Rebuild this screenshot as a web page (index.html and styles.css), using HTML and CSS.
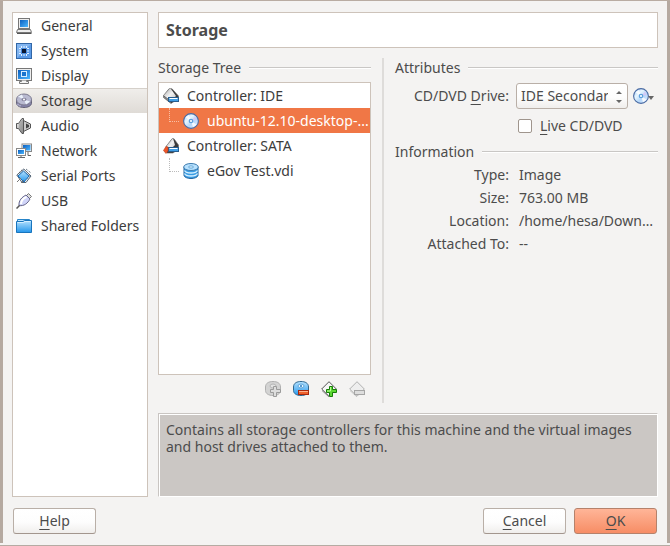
FILE: index.html
```html
<!DOCTYPE html>
<html lang="en">
<head>
<meta charset="utf-8">
<meta name="viewport" content="width=device-width, initial-scale=1">
<title>Settings - Storage</title>
<link rel="stylesheet" href="styles.css">
</head>
<body>
<svg class="defs" aria-hidden="true">
  <defs>
    <linearGradient id="blue" x1="0" y1="0" x2="1" y2="1"><stop offset="0" stop-color="#0b5fc0"/><stop offset="1" stop-color="#4db8ff"/></linearGradient>
    <linearGradient id="sky" x1="0" y1="0" x2="0" y2="1"><stop offset="0" stop-color="#b5e2ff"/><stop offset="1" stop-color="#2496ea"/></linearGradient>
    <linearGradient id="metal" x1="0" y1="0" x2="1" y2="1"><stop offset="0" stop-color="#fff"/><stop offset="1" stop-color="#777"/></linearGradient>
    <linearGradient id="plate" x1="0" y1="0" x2="1" y2="1"><stop offset="0" stop-color="#aaa"/><stop offset=".5" stop-color="#f2f2f2"/><stop offset="1" stop-color="#bbb"/></linearGradient>
    <linearGradient id="disc" x1="0" y1="0" x2="1" y2="1"><stop offset="0" stop-color="#8fc0f5"/><stop offset=".35" stop-color="#e8f6ff"/><stop offset=".6" stop-color="#b5d8fb"/><stop offset="1" stop-color="#eaf0ff"/></linearGradient>
    <symbol id="cd" viewBox="0 0 16 16">
      <circle cx="8" cy="8" r="7.400" fill="url(#disc)" stroke="#4a6aa2" stroke-width="1.100"/>
      <path d="M8 8 2.500 4.500A6.500 6.500 0 0 1 6 2Z" fill="#fff" opacity=".8"/>
      <path d="M8 8 13.500 11.500A6.500 6.500 0 0 1 10 14Z" fill="#fff" opacity=".8"/>
      <path d="M8 8 12 3.500 14 7Z" fill="#d7c6f5" opacity=".8"/>
      <circle cx="8" cy="8" r="2.300" fill="#5b9fdc"/><circle cx="8" cy="8" r="1.100" fill="#fff"/>
    </symbol>
  </defs>
</svg>
<main class="dialog">
  <div class="panes">
    <nav class="categories" aria-label="Categories">
      <a href="#general"><svg viewBox="0 0 16 16"><rect x="2.500" y=".5" width="11" height="10" fill="#eee" stroke="#777"/><rect x="4" y="2" width="8" height="7" fill="url(#blue)"/><path d="M1.500 11.500h13l1 3H.5z" fill="#eee" stroke="#777"/><path d="M1 15.500h14.500" stroke="#555"/></svg>General</a>
      <a href="#system"><svg viewBox="0 0 16 16"><rect x=".5" y=".5" width="15" height="15" fill="#5b9be8" stroke="#3267a7"/><path d="M1 1h14L1 15z" fill="#82b5f0"/><path d="M3 5.500h2M3 8h2M3 10.500h2M11 5.500h2M11 8h2M11 10.500h2M5.500 3v2M8 3v2M10.500 3v2M5.500 11v2M8 11v2M10.500 11v2" stroke="#e3f1ff"/><rect x="5" y="5" width="6" height="6" fill="#4a8bdc"/><rect x="6" y="6" width="4" height="4" fill="#0b1730"/></svg>System</a>
      <a href="#display"><svg viewBox="0 0 16 16"><rect x=".5" y=".5" width="15" height="12" fill="#eee" stroke="#777"/><rect x="2" y="2" width="12" height="9" fill="url(#blue)"/><rect x="5.500" y="3.500" width="5" height="5" fill="#1874cf" stroke="#d8efff"/><path d="M5.500 12.500v1h-2v2h9v-2h-2v-1" fill="#f4f4f4" stroke="#777"/></svg>Display</a>
      <a href="#storage" class="current" aria-current="page"><svg viewBox="0 0 16 16"><path d="M.5 6.500v4C1 13 4 14.500 8 14.500s7-1.500 7.500-4v-4z" fill="#8583a8" stroke="#656378"/><ellipse cx="8" cy="6.500" rx="7.500" ry="5.500" fill="#b9bad1" stroke="#7b798f"/><path d="M8 6.500 2 3.500 6 1.500zM8 6.500l6 2-4 3z" fill="#eaf1fb"/><ellipse cx="8" cy="6.500" rx="2.500" ry="1.700" fill="#86849d"/><circle cx="8" cy="6.500" r="1" fill="#fff"/><path d="M2 11v1.500M4 12v1.500" stroke="#cfd0e8"/></svg>Storage</a>
      <a href="#audio"><svg viewBox="0 0 16 16"><path d="M.5 5.500h2l3.500-5h1.500v15H6l-3.500-5h-2z" fill="url(#metal)" stroke="#555"/><path d="M3 5.500 7 1v14l-4-4.500z" fill="#999" opacity=".6"/><path d="M7.500 2.500 14.500 6v4l-7 3.500z" fill="#ccc" stroke="#555"/><path d="M10 5.500 13 7v2l-3 1.500z" fill="#444"/></svg>Audio</a>
      <a href="#network"><svg viewBox="0 0 16 16"><rect x="6" y="1" width="9.500" height="7.500" fill="#fff" stroke="#888"/><rect x="7" y="2" width="7.500" height="5.500" fill="url(#blue)"/><path d="M12 9v3.500h3" fill="none" stroke="#666"/><rect x=".5" y="5.500" width="9" height="7" fill="#fff" stroke="#888"/><rect x="2" y="7" width="6" height="4" fill="url(#blue)"/><path d="M5 13v1.500M2 14.500h7" stroke="#666"/></svg>Network</a>
      <a href="#serial"><svg viewBox="0 0 16 16"><path d="m.8 7 7-6 7.200 7-5 6.500H6z" fill="#eee" stroke="#567"/><path d="m5 2 10 7M3 4l10 7M10 1l5 4" stroke="#456" stroke-dasharray="1 1"/><path d="m2 8 5.500-5 5.500 5-5 6z" fill="url(#sky)" stroke="#176bb7"/><path d="m1 14 4-4M5 15l3-3" stroke="#777"/></svg>Serial Ports</a>
      <a href="#usb"><svg viewBox="0 0 16 16"><path d="m10.500 2.500 2-2 3 3-2 2z" fill="#ddd" stroke="#777"/><path d="M3 12.500C2.500 7.500 6 4 10 2l4 4c-2 4-6 7.500-11 6.500z" fill="#d0d4f8" stroke="#66668a"/><path d="M5 11c0-4 3-6 5.500-7" fill="none" stroke="#fff" stroke-width="2"/><path d="M3.500 12.500.5 15.500" stroke="#555" stroke-width="1.500"/></svg>USB</a>
      <a href="#shared"><svg viewBox="0 0 16 16"><path d="M1.500 13V1.500h12V5" fill="#bde5ff" stroke="#2784c8"/><path d="M.5 14.500v-11H7L8.500 2.500h7v12z" fill="url(#sky)" stroke="#1874bd"/><path d="M1.500 4.500h6L9 3.500h5.500" fill="none" stroke="#d4efff"/></svg>Shared Folders</a>
    </nav>

    <div class="page">
      <h1>Storage</h1>
      <div class="columns">
        <section class="storage">
          <h2>Storage Tree</h2>
          <ul class="tree">
            <li><svg viewBox="0 0 16 16"><path d="M.5 7.500 6 .8h3L15.500 8v2.500L8 15.500.5 9.500z" fill="#3a3a3a" stroke="#666" stroke-width=".6"/><path d="M.7 7.500 6.300 1H8l5 7-5 5z" fill="url(#plate)"/><path d="m.7 8 7.300 5v2L.7 9.500z" fill="#888"/><rect x="5.500" y="9.500" width="10" height="4" fill="#3f9fe6" stroke="#285d8e"/><path d="M6.500 10.500h8" stroke="#fff"/></svg>Controller: IDE</li>
            <li class="child selected"><svg><use href="#cd"/></svg><span>ubuntu-12.10-desktop-...</span></li>
            <li><svg viewBox="0 0 16 16"><path d="m3 8.500 6-7.700h2L15.500 7v4L10 15H4z" fill="#3a3a3a" stroke="#666" stroke-width=".6"/><path d="m3.200 8.500 6-7.500h1L12 7l-6 6z" fill="url(#plate)"/><rect x="5.500" y="9.500" width="10" height="4" fill="#3f9fe6" stroke="#285d8e"/><path d="M6.500 10.500h8" stroke="#fff"/><path d="m3 8.500-2.500 4 2.500 3L5 13V9z" fill="#ee5528" stroke="#b63a18" stroke-width=".6"/></svg>Controller: SATA</li>
            <li class="child"><svg viewBox="0 0 16 16"><path d="M1 4v8.500C1.500 14.500 5 15.500 8 15.500s6.500-1 7-3V4z" fill="#399ce4" stroke="#22649e"/><path d="M1.500 7.500c1 2 4 2.500 6.500 2.500s5.500-.5 6.500-2.500M1.500 10.500c1 2 4 2.500 6.500 2.500s5.500-.5 6.500-2.500" fill="none" stroke="#d8f1ff" stroke-width="1.300"/><ellipse cx="8" cy="4" rx="7.300" ry="3.500" fill="#b8e2ff" stroke="#3d7bae"/><ellipse cx="8" cy="4" rx="2.500" ry="1.100" fill="#f5fcff" stroke="#63a7d9"/></svg><span>eGov Test.vdi</span></li>
          </ul>
          <div class="tools">
            <button aria-label="Add attachment" disabled><svg viewBox="0 0 16 16"><path d="M.5 6C.5 2 4 .5 8 .5s7.500 1.500 7.500 5.500v3.500c0 3-3 5-7.500 5s-7.500-2-7.500-5z" fill="#d3d3d3" stroke="#b0b0b0"/><ellipse cx="8" cy="5" rx="3" ry="2" fill="#e2e2e2" stroke="#b5b5b5"/><path d="M8.500 5.500h3v3h4v3h-4v4h-3v-4h-3v-3h3z" fill="#ddd" stroke="#9b9b9b"/></svg></button>
            <button aria-label="Remove attachment"><svg viewBox="0 0 16 16"><path d="M.5 6C.5 2 4 .5 8 .5s7.500 1.500 7.500 5.500v3.500c0 3-3 5-7.500 5s-7.500-2-7.500-5z" fill="url(#sky)" stroke="#31688f"/><ellipse cx="8" cy="5" rx="3" ry="2" fill="#e8f7ff" stroke="#5ca4d9"/><circle cx="8" cy="5" r="1" fill="#287bc0"/><rect x="5.500" y="9.500" width="10" height="4" fill="#ef622d" stroke="#a9270c"/><path d="M6 10.500h9" stroke="#ffb18c"/></svg></button>
            <button aria-label="Add controller"><svg viewBox="0 0 16 16"><path d="m.7 8 7.300-7.300L15.300 8 8 15.300z" fill="#f5f5f5" stroke="#555"/><path d="M1 9.500 8 16" stroke="#888"/><path d="M8.500 5.500h3v3h4v3h-4v4h-3v-4h-3v-3h3z" fill="#5ad632" stroke="#167c08"/><path d="M9.500 6v4H6" fill="none" stroke="#b7ff91"/></svg></button>
            <button aria-label="Remove controller" disabled><svg viewBox="0 0 16 16"><path d="m.7 8 7.300-7.300L15.300 8 8 15.300z" fill="#eee" stroke="#b0b0b0"/><path d="M1 9.500 8 16" stroke="#c5c5c5"/><rect x="5.500" y="9.500" width="10" height="4" fill="#ddd" stroke="#a5a5a5"/></svg></button>
          </div>
        </section>

        <section class="details">
          <h2>Attributes</h2>
          <div class="fields attributes">
            <label for="drive">CD/DVD <u>D</u>rive:</label>
            <div class="drive">
              <div class="combo">
                <select id="drive"><option>IDE Secondary Master</option></select>
                <svg viewBox="0 0 6 12"><path d="m0 3 3-3 3 3zM0 9l3 3 3-3z" fill="#666"/></svg>
              </div>
              <button class="choose" aria-label="Choose disk"><svg><use href="#cd"/></svg><svg class="arrow" viewBox="0 0 6 4"><path d="M0 0h6L3 4z" fill="#666"/></svg></button>
            </div>
            <div class="live"><input type="checkbox" id="live"><label for="live"><u>L</u>ive CD/DVD</label></div>
          </div>
          <h2>Information</h2>
          <dl class="fields info">
            <dt>Type:</dt><dd>Image</dd>
            <dt>Size:</dt><dd>763.00 MB</dd>
            <dt>Location:</dt><dd>/home/hesa/Down…</dd>
            <dt>Attached To:</dt><dd>--</dd>
          </dl>
        </section>
      </div>
      <p class="hint">Contains all storage controllers for this machine and the virtual images and host drives attached to them.</p>
    </div>
  </div>
  <footer>
    <button class="push help"><u>H</u>elp</button>
    <button class="push"><u>C</u>ancel</button>
    <button class="push default"><u>O</u>K</button>
  </footer>
</main>
</body>
</html>
```

FILE: styles.css
```css
* { box-sizing: border-box; }

body {
  margin: 0;
  min-height: 100vh;
  display: flex;
  flex-direction: column;
  padding-bottom: 2px;
  border-top: 1px solid #b9aca2;
  border-bottom: 1px solid #b5aba3;
  background: #f4f3f2;
  color: #4c4c4c;
  font: 14px/20px "Noto Sans", "Open Sans", sans-serif;
}

button, select { font: inherit; color: inherit; }
h1, h2, p, ul, dl, dd { margin: 0; padding: 0; }
ul { list-style: none; }
svg { width: 16px; height: 16px; flex: none; display: block; }
.defs { position: absolute; width: 0; height: 0; }
u { text-decoration-thickness: 1px; text-underline-offset: 3px; }

.dialog {
  flex: 1;
  display: flex;
  flex-direction: column;
  gap: 11px;
  padding: 11px 9px 9px;
  border: solid #b5a9a0;
  border-width: 0 3px;
}

.panes {
  flex: 1;
  display: grid;
  grid-template-columns: 136px minmax(0, 1fr);
  gap: 10px;
}

.categories, .tree, h1 {
  background: #fff;
  border: 1px solid #cdc3ba;
}

.categories a {
  display: flex;
  align-items: center;
  gap: 9px;
  height: 25px;
  padding-left: 3px;
  color: #3c3c3c;
  text-decoration: none;
  white-space: nowrap;
}

.categories .current {
  background: linear-gradient(#f0eeeb, #dfdbd6);
  border-top: 1px solid #d5d0ca;
}

.page { display: flex; flex-direction: column; gap: 10px; min-width: 0; }

h1 {
  padding: 7px;
  font-size: 16px;
  font-weight: 700;
}

.columns {
  flex: 1;
  display: grid;
  grid-template-columns: 226px minmax(0, 1fr);
  gap: 11px;
}

.storage {
  display: flex;
  flex-direction: column;
  padding-right: 11px;
  border-right: 2px solid #dedcda;
}

h2 {
  display: flex;
  align-items: center;
  gap: 8px;
  font-size: 14px;
  font-weight: 400;
}

h2::after {
  content: "";
  flex: 1;
  height: 2px;
  background: linear-gradient(#c9c7c5 50%, #fff 50%);
}

.tree { flex: 1; margin-top: 4px; color: #3c3c3c; }

.tree li {
  display: flex;
  align-items: center;
  gap: 8px;
  height: 25px;
  padding-left: 4px;
  white-space: nowrap;
}

.tree .child { padding-left: 10px; }

.tree .child::before {
  content: "";
  flex: none;
  width: 9px;
  height: 13px;
  margin-right: -4px;
  align-self: flex-start;
  border: dotted #bbb;
  border-width: 0 0 1px 1px;
}

.tree .selected {
  background: #f07746;
  color: #fff;
}

.tree .selected::before { border-color: #f8bfa5; }

.tools {
  display: flex;
  justify-content: flex-end;
  gap: 12px;
  padding: 6px 6px;
}

.tools button, .choose { padding: 0; border: 0; background: none; }

.fields {
  display: grid;
  grid-template-columns: 114px minmax(0, 1fr);
  column-gap: 7px;
}

.attributes {
  grid-template-rows: 35px 25px;
  align-items: center;
  padding-bottom: 4px;
}

.attributes > label, dt { text-align: right; white-space: nowrap; }
.drive { display: flex; align-items: center; gap: 5px; }
.combo { position: relative; flex: 1; min-width: 0; }

select, .push {
  height: 26px;
  border: 1px solid #b9afa7;
  border-radius: 3px;
  background: linear-gradient(#fff, #fdfdfd 55%, #f0eeec);
}

select {
  display: block;
  width: 100%;
  padding: 0 19px 0 4px;
  appearance: none;
}

.combo svg {
  position: absolute;
  right: 6px;
  top: 8px;
  width: 6px;
  height: 12px;
  pointer-events: none;
}

.choose { display: flex; align-items: center; padding-right: 4px; }
.choose .arrow { width: 6px; height: 4px; margin: 4px 0 0 -1px; }

.live {
  grid-column: 2;
  display: flex;
  align-items: center;
  gap: 8px;
  padding-left: 2px;
}

.live input {
  appearance: none;
  width: 14px;
  height: 14px;
  margin: 0;
  border: 1px solid #9f958d;
  border-radius: 2px;
  background: #fff;
}

.info {
  column-gap: 10px;
  padding-top: 1px;
  line-height: 23px;
}

dd { white-space: nowrap; }

.hint {
  min-height: 84px;
  padding: 7px;
  border: 1px solid #c9c5c2;
  border-right-color: #fff;
  border-bottom-color: #fff;
  box-shadow: inset 1px 1px #fff;
  background: #cbc7c4;
  line-height: 17px;
}

footer { display: flex; gap: 8px; padding: 0 1px; }
.push { width: 83px; padding: 0; border-bottom-color: #a3968e; }
.help { margin-right: auto; }

.default {
  border-color: #b5826b;
  background: linear-gradient(#ffb598, #f78d65);
}
```
